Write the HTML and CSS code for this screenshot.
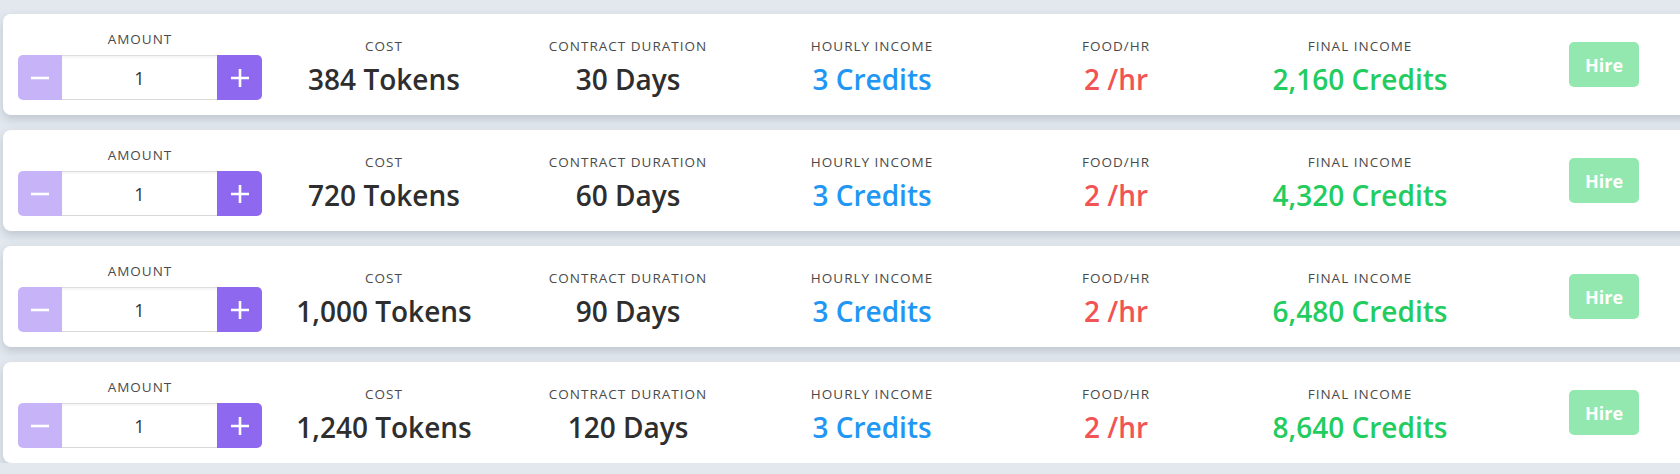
FILE: index.html
```html
<!DOCTYPE html>
<html>
	<head>
		<title>Hire Workers</title>
		<link rel="stylesheet" href="styles.css">
	</head>
	<body>
		<div class="hire-list">
			<div class="offer">
				<div class="field">
					<span class="label">Amount</span>
					<div class="stepper">
						<button class="step step-minus"><svg width="18" height="18" viewBox="0 0 18 18"><path d="M0 9h18"/></svg></button>
						<input class="step-input" type="text" value="1">
						<button class="step step-plus"><svg width="18" height="18" viewBox="0 0 18 18"><path d="M0 9h18M9 0v18"/></svg></button>
					</div>
				</div>
				<div class="stat"><span class="label">Cost</span><span class="value">384 Tokens</span></div>
				<div class="stat"><span class="label">Contract Duration</span><span class="value">30 Days</span></div>
				<div class="stat"><span class="label">Hourly Income</span><span class="value blue">3 Credits</span></div>
				<div class="stat"><span class="label">Food/hr</span><span class="value red">2 /hr</span></div>
				<div class="stat"><span class="label">Final Income</span><span class="value green">2,160 Credits</span></div>
				<div class="action"><button class="hire-btn" disabled>Hire</button></div>
			</div>
			<div class="offer">
				<div class="field">
					<span class="label">Amount</span>
					<div class="stepper">
						<button class="step step-minus"><svg width="18" height="18" viewBox="0 0 18 18"><path d="M0 9h18"/></svg></button>
						<input class="step-input" type="text" value="1">
						<button class="step step-plus"><svg width="18" height="18" viewBox="0 0 18 18"><path d="M0 9h18M9 0v18"/></svg></button>
					</div>
				</div>
				<div class="stat"><span class="label">Cost</span><span class="value">720 Tokens</span></div>
				<div class="stat"><span class="label">Contract Duration</span><span class="value">60 Days</span></div>
				<div class="stat"><span class="label">Hourly Income</span><span class="value blue">3 Credits</span></div>
				<div class="stat"><span class="label">Food/hr</span><span class="value red">2 /hr</span></div>
				<div class="stat"><span class="label">Final Income</span><span class="value green">4,320 Credits</span></div>
				<div class="action"><button class="hire-btn" disabled>Hire</button></div>
			</div>
			<div class="offer">
				<div class="field">
					<span class="label">Amount</span>
					<div class="stepper">
						<button class="step step-minus"><svg width="18" height="18" viewBox="0 0 18 18"><path d="M0 9h18"/></svg></button>
						<input class="step-input" type="text" value="1">
						<button class="step step-plus"><svg width="18" height="18" viewBox="0 0 18 18"><path d="M0 9h18M9 0v18"/></svg></button>
					</div>
				</div>
				<div class="stat"><span class="label">Cost</span><span class="value">1,000 Tokens</span></div>
				<div class="stat"><span class="label">Contract Duration</span><span class="value">90 Days</span></div>
				<div class="stat"><span class="label">Hourly Income</span><span class="value blue">3 Credits</span></div>
				<div class="stat"><span class="label">Food/hr</span><span class="value red">2 /hr</span></div>
				<div class="stat"><span class="label">Final Income</span><span class="value green">6,480 Credits</span></div>
				<div class="action"><button class="hire-btn" disabled>Hire</button></div>
			</div>
			<div class="offer">
				<div class="field">
					<span class="label">Amount</span>
					<div class="stepper">
						<button class="step step-minus"><svg width="18" height="18" viewBox="0 0 18 18"><path d="M0 9h18"/></svg></button>
						<input class="step-input" type="text" value="1">
						<button class="step step-plus"><svg width="18" height="18" viewBox="0 0 18 18"><path d="M0 9h18M9 0v18"/></svg></button>
					</div>
				</div>
				<div class="stat"><span class="label">Cost</span><span class="value">1,240 Tokens</span></div>
				<div class="stat"><span class="label">Contract Duration</span><span class="value">120 Days</span></div>
				<div class="stat"><span class="label">Hourly Income</span><span class="value blue">3 Credits</span></div>
				<div class="stat"><span class="label">Food/hr</span><span class="value red">2 /hr</span></div>
				<div class="stat"><span class="label">Final Income</span><span class="value green">8,640 Credits</span></div>
				<div class="action"><button class="hire-btn" disabled>Hire</button></div>
			</div>
		</div>
	</body>
</html>
```

FILE: styles.css
```css
html {
	background-color: #e2e8ee;
}
body {
	margin: 0px;
	overflow: hidden;
	font-family: "Open Sans", "Noto Sans", sans-serif;
	color: #333333;
}
.hire-list {
	display: flex;
	flex-direction: column;
	gap: 15px;
	width: 1738px;
	padding: 14px 0px 0px 3px;
}
.offer {
	display: grid;
	grid-template-columns: repeat(7, minmax(0px, 1fr));
	align-items: center;
	height: 101px;
	padding: 0px 15px;
	background-color: white;
	border-radius: 8px;
	box-shadow: 0px 4px 10px rgba(50, 60, 80, 0.2);
}
.label {
	font-size: 13.5px;
	letter-spacing: 1px;
	text-transform: uppercase;
	color: #4a4a4a;
	line-height: 18px;
}
.field {
	display: flex;
	flex-direction: column;
	align-items: center;
	gap: 7px;
	margin-top: 1px;
}
.stepper {
	display: flex;
	width: 100%;
	height: 45px;
}
.step {
	display: flex;
	align-items: center;
	justify-content: center;
	flex: none;
	width: 44px;
	border: none;
	padding: 0px;
	cursor: pointer;
}
.step svg {
	stroke: white;
	stroke-width: 2.6;
	fill: none;
}
.step-minus {
	background-color: #c7b4f8;
	border-radius: 5px 0px 0px 5px;
}
.step-plus {
	width: 45px;
	background-color: #8e69ef;
	border-radius: 0px 5px 5px 0px;
}
.step-input {
	flex: 1;
	width: 0px;
	min-width: 0px;
	border: none;
	border-top: 1px solid #dedede;
	border-bottom: 1px solid #d8d8d8;
	box-shadow: inset 0px 2px 2px rgba(0, 0, 0, 0.04);
	text-align: center;
	font-family: inherit;
	font-size: 18px;
	color: #333333;
	padding: 0px;
}
.stat {
	display: flex;
	flex-direction: column;
	align-items: center;
	white-space: nowrap;
	gap: 6px;
	padding-top: 4px;
}
.value {
	font-size: 28px;
	font-weight: 600;
	line-height: 36px;
	color: #2e2e2e;
}
.blue {
	color: #2196f3;
}
.red {
	color: #f05454;
}
.green {
	color: #22cc5e;
}
.action {
	display: flex;
	justify-content: center;
}
.hire-btn {
	height: 45px;
	padding: 0px 16px;
	border: none;
	border-radius: 5px;
	background-color: #93e8b0;
	color: white;
	font-family: inherit;
	font-size: 18px;
	font-weight: 700;
}
```
